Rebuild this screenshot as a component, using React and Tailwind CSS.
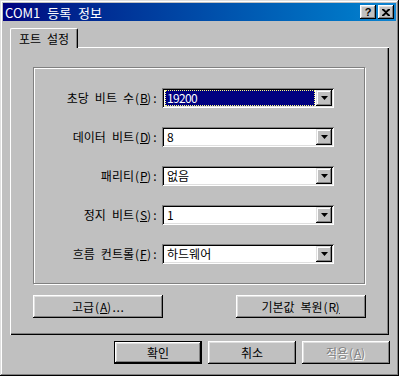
import React from "react";

const font = { fontFamily: '"Noto Sans CJK KR", "Noto Sans", sans-serif' };

// Render text like a bitmap Korean UI font: ASCII half-width (6px), Hangul full width.
function T({ s, u }) {
  const out = [];
  for (let i = 0; i < s.length; i++) {
    const c = s[i];
    if (c === ".") {
      out.push(
        <span key={i} className="inline-block w-[4px] text-center">
          .
        </span>
      );
    } else if (c.charCodeAt(0) < 128) {
      out.push(
        <span key={i} className={`inline-block w-[6px] text-center ${u === i ? "underline" : ""}`}>
          {c === " " ? "\u00a0" : c}
        </span>
      );
    } else {
      out.push(<span key={i}>{c}</span>);
    }
  }
  return <>{out}</>;
}

function Arrow() {
  return (
    <svg width="7" height="4" viewBox="0 0 7 4" className="block">
      <path d="M0 0h7L3.5 4z" fill="#000" />
    </svg>
  );
}

function Combo({ value, selected }) {
  return (
    <div className="w-[172px] h-[20px] bg-white p-[2px] flex shadow-[inset_1px_1px_#808080,inset_-1px_-1px_#fff,inset_2px_2px_#000,inset_-2px_-2px_#dfdfdf]">
      <div className="flex-1 flex items-center pl-[1px] pr-[1px] min-w-0">
        {selected ? (
          <div className="flex-1 h-[16px] bg-[#000080] border border-dotted border-[#ffff7f] text-white text-[12px] leading-[14px] pl-[1px] flex items-center">
            <T s={value} />
          </div>
        ) : (
          <div className="text-black text-[12px] leading-[14px] pl-[2px]">
            <T s={value} />
          </div>
        )}
      </div>
      <div className="w-[16px] h-[16px] bg-[#c0c0c0] flex items-center justify-center shadow-[inset_-1px_-1px_#000,inset_1px_1px_#dfdfdf,inset_-2px_-2px_#808080,inset_2px_2px_#fff]">
        <Arrow />
      </div>
    </div>
  );
}

function Row({ label, value, selected }) {
  const u = label.length - 3;
  return (
    <div className="flex items-center">
      <div className="w-[124px] text-right text-[12px] leading-[14px] text-black whitespace-nowrap">
        <T s={label} u={u} />
      </div>
      <div className="ml-[4px]">
        <Combo value={value} selected={selected} />
      </div>
    </div>
  );
}

function Btn({ children, w = "w-[130px]", disabled }) {
  return (
    <div
      className={`${w} h-[23px] bg-[#c0c0c0] flex items-center justify-center text-[12px] leading-[14px] whitespace-nowrap shadow-[inset_-1px_-1px_#000,inset_1px_1px_#fff,inset_-2px_-2px_#808080,inset_2px_2px_#dfdfdf] ${
        disabled ? "text-[#808080] [text-shadow:1px_1px_0_#fff]" : "text-black"
      }`}
    >
      {children}
    </div>
  );
}

export default function App() {
  return (
    <div
      className="w-[399px] h-[376px] bg-[#c0c0c0] p-[3px] flex flex-col shadow-[inset_-1px_-1px_#000,inset_1px_1px_#dfdfdf,inset_-2px_-2px_#808080,inset_2px_2px_#fff]"
      style={font}
    >
      {/* Title bar */}
      <div className="h-[18px] bg-gradient-to-r from-[#000080] to-[#1084d0] flex items-center pl-[2px] pr-[2px]">
        <div className="text-white text-[13px] leading-[15px] flex-1 whitespace-nowrap [word-spacing:4px]">COM1 등록 정보</div>
        <div className="w-[16px] h-[14px] bg-[#c0c0c0] flex items-center justify-center shadow-[inset_-1px_-1px_#000,inset_1px_1px_#fff,inset_-2px_-2px_#808080,inset_2px_2px_#dfdfdf]">
          <span className="text-[11px] leading-[11px] font-bold text-black" style={{ fontFamily: '"Liberation Sans", sans-serif' }}>?</span>
        </div>
        <div className="w-[16px] h-[14px] ml-[2px] bg-[#c0c0c0] flex items-center justify-center shadow-[inset_-1px_-1px_#000,inset_1px_1px_#fff,inset_-2px_-2px_#808080,inset_2px_2px_#dfdfdf]">
          <svg width="8" height="7" viewBox="0 0 8 7" className="block">
            <path d="M0 0h2l2 2 2-2h2v1L5 3.5 8 6v1H6L4 5 2 7H0V6l3-2.5L0 1z" fill="#000" />
          </svg>
        </div>
      </div>

      {/* Tabs */}
      <div className="px-[7px] pt-[7px]">
        <div className="flex">
          <div className="relative z-10 -mb-[1px] w-[68px] h-[20px] bg-[#c0c0c0] border-l border-t border-white border-r border-r-black rounded-tl-[2px] rounded-tr-[2px] shadow-[inset_-1px_0_#808080] flex justify-center pt-[3px]">
            <span className="text-[12px] leading-[14px] text-black whitespace-nowrap">
              <T s="포트 설정" />
            </span>
          </div>
        </div>
        <div className="w-[379px] h-[288px] pl-[23px] pt-[20px] shadow-[inset_1px_1px_#fff,inset_-1px_-1px_#000,inset_-2px_-2px_#808080]">
          <div className="w-[332px] h-[217px] border border-[#808080] shadow-[1px_1px_#fff,inset_1px_1px_#fff] flex flex-col pt-[20px] gap-[19px]">
            <Row label="초당 비트 수(B):" value="19200" selected />
            <Row label="데이터 비트(D):" value="8" />
            <Row label="패리티(P):" value="없음" />
            <Row label="정지 비트(S):" value="1" />
            <Row label="흐름 컨트롤(F):" value="하드웨어" />
          </div>
          <div className="w-[333px] mt-[11px] flex justify-between">
            <Btn>
              <T s="고급(A)..." u={3} />
            </Btn>
            <Btn>
              <T s="기본값 복원(R)" u={8} />
            </Btn>
          </div>
        </div>
      </div>

      {/* Bottom buttons */}
      <div className="flex justify-end gap-[6px] pr-[6px] mt-[6px]">
        <div className="w-[88px] h-[23px] border border-black">
          <div className="w-full h-full bg-[#c0c0c0] flex items-center justify-center text-[12px] leading-[14px] text-black shadow-[inset_-1px_-1px_#000,inset_1px_1px_#fff,inset_-2px_-2px_#808080,inset_2px_2px_#dfdfdf]">
            확인
          </div>
        </div>
        <Btn w="w-[88px]">취소</Btn>
        <Btn w="w-[88px]" disabled>
          <T s="적용(A)" u={3} />
        </Btn>
      </div>
    </div>
  );
}
